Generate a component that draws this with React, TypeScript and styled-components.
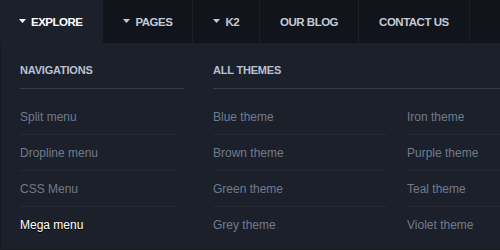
import React from "react";
import styled, { createGlobalStyle } from "styled-components";

const GlobalStyle = createGlobalStyle`
  *, *::before, *::after {
    box-sizing: border-box;
  }
  html, body {
    margin: 0;
    padding: 0;
    background: #1c202a;
    font-family: "Liberation Sans", Arial, sans-serif;
  }
`;

const Page = styled.div`
  width: 500px;
  height: 250px;
  overflow: hidden;
  display: flex;
  flex-direction: column;
`;

const NavBar = styled.nav`
  display: flex;
  height: 43px;
  flex: none;
  background: #11151b;
`;

const Tab = styled.div<{ $active?: boolean }>`
  display: flex;
  align-items: center;
  gap: 5px;
  padding: 0 20px;
  border-right: 1px solid ${(p) => (p.$active ? "#1c202a" : "#1b1f26")};
  background: ${(p) => (p.$active ? "#1c202a" : "transparent")};
  color: ${(p) => (p.$active ? "#ffffff" : "#c3cad5")};
  font-size: 11.5px;
  font-weight: 700;
  letter-spacing: -0.5px;
  text-transform: uppercase;
  white-space: nowrap;
  &:first-child {
    padding-left: 19px;
  }
`;

const Caret = styled.svg`
  width: 7px;
  height: 4px;
  flex: none;
  margin-top: -1px;
`;

const Panel = styled.div`
  flex: 1;
  display: flex;
  gap: 29px;
  padding: 20px 0 0 19px;
  border-left: 1px solid #151920;
  border-bottom: 1px solid #151920;
  background: #1c202a;
`;

const Column = styled.section<{ $width?: number }>`
  flex: ${(p) => (p.$width ? "none" : "1")};
  width: ${(p) => (p.$width ? `${p.$width}px` : "auto")};
  display: flex;
  flex-direction: column;
`;

const Heading = styled.h3`
  margin: 0 0 10px;
  padding-bottom: 11px;
  border-bottom: 1px solid #363d49;
  color: #b7c2d2;
  font-size: 11px;
  line-height: 14px;
  font-weight: 700;
  letter-spacing: -0.2px;
  text-transform: uppercase;
`;

const SubColumns = styled.div`
  display: flex;
`;

const List = styled.ul<{ $width: number; $inset: number }>`
  list-style: none;
  margin: 0;
  padding: 0 ${(p) => p.$inset}px 0 0;
  width: ${(p) => p.$width}px;
  flex: none;
`;

const Item = styled.li<{ $current?: boolean }>`
  height: 36px;
  padding-top: 1px;
  line-height: 34px;
  border-bottom: 1px solid #242933;
  color: ${(p) => (p.$current ? "#ffffff" : "#6f7b8c")};
  text-shadow: ${(p) => (p.$current ? "0 1px 0 #000" : "none")};
  font-size: 12px;
  white-space: nowrap;
  &:last-child {
    border-bottom-color: transparent;
  }
`;

const DownCaret = ({ color }: { color: string }) => (
  <Caret viewBox="0 0 7 4">
    <path d="M0 0H7L3.5 4Z" fill={color} />
  </Caret>
);

const tabs = [
  { label: "Explore", caret: true, active: true },
  { label: "Pages", caret: true },
  { label: "K2", caret: true },
  { label: "Our Blog" },
  { label: "Contact Us" },
];

const navItems = ["Split menu", "Dropline menu", "CSS Menu", "Mega menu"];
const themesA = ["Blue theme", "Brown theme", "Green theme", "Grey theme"];
const themesB = ["Iron theme", "Purple theme", "Teal theme", "Violet theme"];

export default function App() {
  return (
    <>
      <GlobalStyle />
      <Page>
        <NavBar>
          {tabs.map((t) => (
            <Tab key={t.label} $active={t.active}>
              {t.caret && <DownCaret color={t.active ? "#ffffff" : "#c3cad5"} />}
              {t.label}
            </Tab>
          ))}
        </NavBar>
        <Panel>
          <Column $width={164}>
            <Heading>Navigations</Heading>
            <List $width={164} $inset={10}>
              {navItems.map((n) => (
                <Item key={n} $current={n === "Mega menu"}>
                  {n}
                </Item>
              ))}
            </List>
          </Column>
          <Column>
            <Heading>All Themes</Heading>
            <SubColumns>
              <List $width={194} $inset={20}>
                {themesA.map((n) => (
                  <Item key={n}>{n}</Item>
                ))}
              </List>
              <List $width={194} $inset={20}>
                {themesB.map((n) => (
                  <Item key={n}>{n}</Item>
                ))}
              </List>
            </SubColumns>
          </Column>
        </Panel>
      </Page>
    </>
  );
}
